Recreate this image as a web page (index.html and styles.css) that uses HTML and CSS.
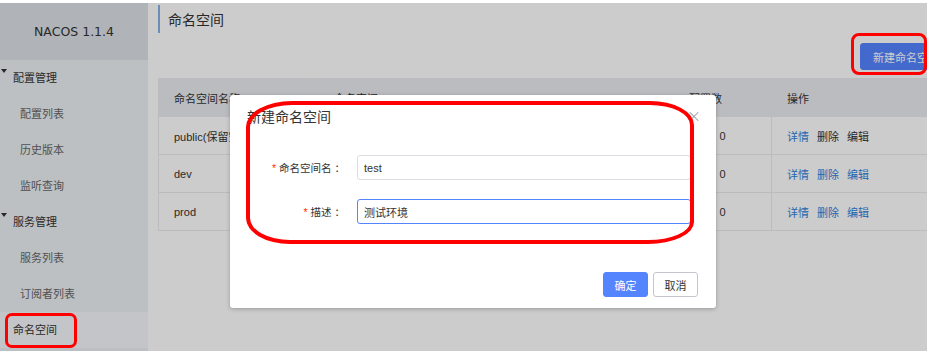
FILE: index.html
```html
<!DOCTYPE html>
<html lang="zh-CN">

<head>
    <meta charset="UTF-8">
    <meta name="viewport" content="width=device-width, initial-scale=1.0">
    <title>命名空间 - Nacos</title>
    <link rel="stylesheet" href="styles.css">
</head>

<body>
    <div class="app">
        <aside class="sidebar">
            <div class="brand">NACOS 1.1.4</div>
            <ul class="menu">
                <li class="group"><span class="caret"></span>配置管理</li>
                <li class="sub">配置列表</li>
                <li class="sub">历史版本</li>
                <li class="sub">监听查询</li>
                <li class="group"><span class="caret"></span>服务管理</li>
                <li class="sub">服务列表</li>
                <li class="sub">订阅者列表</li>
                <li class="top active">命名空间</li>
            </ul>
        </aside>

        <main class="content">
            <div class="page-title">命名空间</div>
            <div class="toolbar">
                <button class="btn btn-primary btn-new">新建命名空间</button>
            </div>

            <table class="ns-table">
                <colgroup>
                    <col style="width: 160px">
                    <col style="width: 355px">
                    <col style="width: 98px">
                    <col>
                </colgroup>
                <thead>
                    <tr>
                        <th>命名空间名称</th>
                        <th>命名空间ID</th>
                        <th>配置数</th>
                        <th>操作</th>
                    </tr>
                </thead>
                <tbody>
                    <tr>
                        <td>public(保留空间)</td>
                        <td></td>
                        <td class="num">0</td>
                        <td><a class="link">详情</a><a class="link off">删除</a><a class="link off">编辑</a></td>
                    </tr>
                    <tr>
                        <td>dev</td>
                        <td>4e1c3f6a-9d2b-4f7e-8a1c-2b5d6e7f8a90</td>
                        <td class="num">0</td>
                        <td><a class="link">详情</a><a class="link">删除</a><a class="link">编辑</a></td>
                    </tr>
                    <tr>
                        <td>prod</td>
                        <td>7a2d9b1e-3c4f-4a5b-9e8d-1f2a3b4c5d6e</td>
                        <td class="num">0</td>
                        <td><a class="link">详情</a><a class="link">删除</a><a class="link">编辑</a></td>
                    </tr>
                </tbody>
            </table>
        </main>

        <div class="mask"></div>

        <div class="dialog">
            <div class="dialog-head">新建命名空间</div>
            <span class="dialog-close"></span>
            <div class="dialog-body">
                <div class="form-row">
                    <label class="form-label"><span class="req">*</span> 命名空间名 ：</label>
                    <input class="form-input" type="text" value="test">
                </div>
                <div class="form-row">
                    <label class="form-label"><span class="req">*</span> 描述 ：</label>
                    <input class="form-input focus" type="text" value="测试环境">
                </div>
            </div>
            <div class="dialog-foot">
                <button class="btn btn-primary">确定</button>
                <button class="btn btn-normal">取消</button>
            </div>
        </div>

        <!-- marcas rojas de la captura -->
        <div class="mark mark-dialog"></div>
        <div class="mark mark-new"></div>
        <div class="mark mark-menu"></div>
    </div>
</body>

</html>
```

FILE: styles.css
```css
body {
    margin: 0;
    background: #fff;
    font-family: "Liberation Sans", "Noto Sans CJK SC", sans-serif;
    font-size: 11px;
    color: #333;
}

.app {
    position: relative;
    margin-top: 3px;
    width: 927px;
    height: 348px;
    overflow: hidden;
    display: flex;
    background: #fff;
}

/* sidebar */
.sidebar {
    flex: none;
    width: 148px;
    background: #ecf0f4;
    display: flex;
    flex-direction: column;
}

.brand {
    height: 57px;
    background: #dde1e6;
    display: flex;
    align-items: center;
    justify-content: center;
    font-family: "DejaVu Sans", sans-serif;
    font-size: 12.5px;
    color: #333;
}

.menu {
    list-style: none;
    margin: 0;
    padding: 0;
}

.menu li {
    height: 36px;
    line-height: 36px;
    white-space: nowrap;
}

.menu .group {
    padding-left: 1px;
    color: #333;
}

.menu .sub {
    padding-left: 20px;
    color: #666;
}

.menu .top {
    padding-left: 13px;
    color: #333;
}

.menu .active {
    background: #f4f7fa;
}

.caret {
    display: inline-block;
    width: 0;
    height: 0;
    border-top: 4px solid #333;
    border-left: 3px solid transparent;
    border-right: 3px solid transparent;
    margin-right: 6px;
    vertical-align: 9px;
}

/* main */
.content {
    flex: none;
    width: 794px;
    padding: 2px 0 0 10px;
}

.page-title {
    height: 28px;
    line-height: 30px;
    border-left: 2px solid #86b1e4;
    padding-left: 8px;
    font-size: 14px;
    color: #333;
}

.toolbar {
    margin-top: 10px;
    display: flex;
    justify-content: flex-end;
}

.btn {
    font-family: "Liberation Sans", "Noto Sans CJK SC", sans-serif;
    font-size: 11px;
    height: 25px;
    border-radius: 3px;
    padding: 0 11px;
    cursor: pointer;
}

.btn-primary {
    background: #5584ff;
    border: 1px solid #5584ff;
    color: #fff;
}

.btn-normal {
    background: #fff;
    border: 1px solid #c4c6cf;
    color: #333;
}

.btn-new {
    height: 27px;
    padding: 0 12px;
}

.ns-table {
    margin-top: 8px;
    width: 794px;
    table-layout: fixed;
    border-collapse: collapse;
    border-left: 1px solid #e3e4e8;
}

.ns-table th,
.ns-table td {
    border: 1px solid #ebebee;
    padding: 0 15px;
    text-align: left;
    font-weight: normal;
    white-space: nowrap;
    overflow: hidden;
}

.ns-table th {
    height: 37px;
    background: #eaecf0;
    color: #333;
}

.ns-table td {
    height: 37px;
}

.ns-table td.num {
    text-align: center;
}

.link {
    color: #2f7fdc;
    margin-right: 8px;
    cursor: pointer;
}

.link.off {
    color: #333;
}

/* mask and dialog */
.mask {
    position: absolute;
    inset: 0;
    background: rgba(0, 0, 0, 0.2);
}

.dialog {
    position: absolute;
    left: 230px;
    top: 92px;
    width: 486px;
    height: 213px;
    box-sizing: border-box;
    background: #fff;
    border-radius: 3px;
    box-shadow: 0 1px 4px rgba(0, 0, 0, 0.25);
    display: flex;
    flex-direction: column;
}

.dialog-head {
    padding: 14px 17px 0;
    font-size: 14px;
    line-height: 16px;
    color: #333;
}

.dialog-close {
    position: absolute;
    right: 17px;
    top: 17px;
    width: 10px;
    height: 10px;
}

.dialog-close::before,
.dialog-close::after {
    content: "";
    position: absolute;
    left: -1px;
    top: 4px;
    width: 12px;
    height: 1px;
    background: #999;
    transform: rotate(45deg);
}

.dialog-close::after {
    transform: rotate(-45deg);
}

.dialog-body {
    padding-top: 30px;
    display: flex;
    flex-direction: column;
    gap: 19px;
}

.form-row {
    display: flex;
    align-items: center;
    gap: 12px;
}

.form-label {
    width: 115px;
    text-align: right;
    font-size: 10.5px;
    color: #333;
    white-space: nowrap;
}

.req {
    color: #ff3000;
}

.form-input {
    width: 334px;
    height: 25px;
    box-sizing: border-box;
    border: 1px solid #dcdee3;
    border-radius: 3px;
    padding: 0 6px;
    font-family: "Liberation Sans", "Noto Sans CJK SC", sans-serif;
    font-size: 11px;
    color: #333;
    outline: none;
}

.form-input.focus {
    border-color: #5584ff;
}

.dialog-foot {
    margin-top: auto;
    padding: 0 18px 11px 0;
    display: flex;
    justify-content: flex-end;
    gap: 5px;
}

.dialog-foot .btn {
    width: 45px;
    padding: 0;
}

/* red annotations */
.mark {
    position: absolute;
    border: 4px solid #f00;
    box-sizing: border-box;
}

.mark-dialog {
    left: 246px;
    top: 98px;
    width: 448px;
    height: 143px;
    border-radius: 46px 44px 46px 44px / 26px 24px 22px 26px;
}

.mark-new {
    left: 851px;
    top: 30px;
    width: 76px;
    height: 42px;
    border-width: 3px;
    border-radius: 8px;
}

.mark-menu {
    left: 5px;
    top: 310px;
    width: 72px;
    height: 35px;
    border-width: 3px;
    border-radius: 7px;
}
```
